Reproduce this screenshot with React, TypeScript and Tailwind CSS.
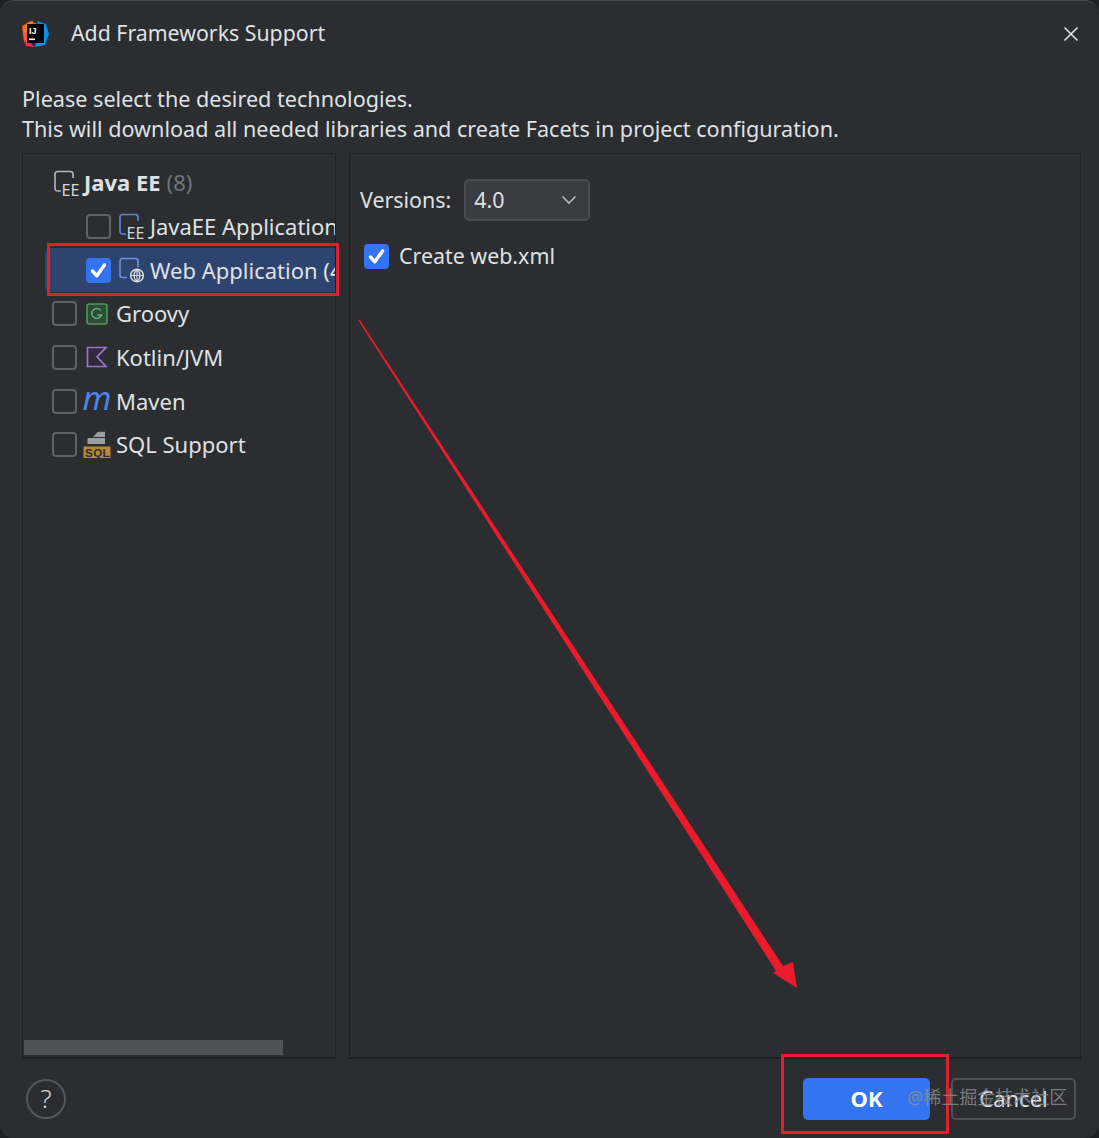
import React from "react";

const Box = ({ checked = false }: { checked?: boolean }) =>
  checked ? (
    <span className="w-[25px] h-[25px] rounded-[4px] bg-[#3574f0] flex items-center justify-center shrink-0">
      <svg width="19" height="19" viewBox="0 0 19 19" fill="none">
        <path d="M3.5 10 L7.8 14.8 L15.5 4" stroke="#fff" strokeWidth="3.4" strokeLinecap="round" strokeLinejoin="round" />
      </svg>
    </span>
  ) : (
    <span className="w-[25px] h-[25px] rounded-[4px] border-2 border-[#5f6165] shrink-0" />
  );

const EE = ({ color }: { color: string }) => (
  <svg width="26" height="26" viewBox="0 0 26 26" fill="none" className="shrink-0">
    <path d="M8 21 H4.5 a2.5 2.5 0 0 1 -2.5 -2.5 V4 a2.5 2.5 0 0 1 2.5 -2.5 H17.5 a2.5 2.5 0 0 1 2.5 2.5 V8" stroke={color} strokeWidth="1.6" />
    <text x="8.5" y="25.5" fontSize="16" fill="#d5d7da" fontFamily="'Noto Sans', sans-serif">EE</text>
  </svg>
);

const Web = () => (
  <svg width="26" height="26" viewBox="0 0 26 26" fill="none" className="shrink-0">
    <path d="M9 20.5 H4.5 a2.5 2.5 0 0 1 -2.5 -2.5 V4 a2.5 2.5 0 0 1 2.5 -2.5 H17.5 a2.5 2.5 0 0 1 2.5 2.5 V10" stroke="#6c93e8" strokeWidth="1.6" />
    <circle cx="19" cy="18.5" r="6.3" fill="#2e436e" stroke="#d5d7da" strokeWidth="1.6" />
    <path d="M13 18.5 H25 M19 12.5 V24.5 M19 12.5 C15 15.5 15 21.5 19 24.5 M19 12.5 C23 15.5 23 21.5 19 24.5" stroke="#d5d7da" strokeWidth="1.2" />
  </svg>
);

const Groovy = () => (
  <svg width="24" height="24" viewBox="0 0 24 24" fill="none" className="shrink-0">
    <rect x="2" y="2" width="20" height="20" rx="2.5" fill="#2f4a36" stroke="#4e9a5b" strokeWidth="1.6" />
    <path d="M16 8.6 A5 5 0 1 0 16.6 13 H12.5" stroke="#5fb56e" strokeWidth="1.5" />
  </svg>
);

const Kotlin = () => (
  <svg width="24" height="24" viewBox="0 0 24 24" fill="none" className="shrink-0">
    <path d="M2.5 2.5 H21 L12 11.8 L21 21.5 H2.5 Z" stroke="#9873cf" strokeWidth="1.7" strokeLinejoin="miter" fill="#2f2b38" />
  </svg>
);

const Sql = () => (
  <svg width="28" height="30" viewBox="0 0 28 30" fill="none" className="shrink-0">
    <path d="M4.5 8 H22 V14 H4.5 Z" fill="#9a9da3" />
    <path d="M10 7 L15 1.8 H22 V7 Z" fill="#9a9da3" />
    <rect x="0.5" y="16.5" width="27" height="11.5" fill="#b98a35" />
    <text x="2" y="26.5" fontSize="11.5" fontWeight="700" letterSpacing="0.5" fill="#2b2d30" fontFamily="'Liberation Sans', sans-serif">SQL</text>
  </svg>
);

const Row = ({ indent, icon, label, checked, selected }: { indent: string; icon: React.ReactNode; label: string; checked?: boolean; selected?: boolean }) => (
  <div className={`h-[43.67px] flex items-center whitespace-nowrap overflow-hidden ${indent} ${selected ? "bg-[#2e436e] rounded-l-[6px] ml-[22px]" : ""}`}>
    <Box checked={checked} />
    <span className="ml-[7px] w-[26px] flex justify-center">{icon}</span>
    <span className="ml-[6px]">{label}</span>
  </div>
);

export default function App() {
  return (
    <div className="relative w-[1099px] h-[1138px] overflow-hidden bg-[#1f2023] font-['Noto_Sans','Liberation_Sans',sans-serif] text-[22px] text-[#dfe1e5]">
      <div className="w-full h-full flex flex-col rounded-[14px] border-t border-[#45474b] bg-[#2b2d30]">
        <header className="h-[66px] flex items-center pl-[21px] pr-[20px] shrink-0">
          <svg width="28" height="28" viewBox="0 0 28 28" className="shrink-0">
            <path d="M1 6 L10 1 L16 4 L10 24 L3 22 Z" fill="#fc5c3a" />
            <path d="M6 3 L12 1 L10 12 L2 12 Z" fill="#f97a12" />
            <path d="M16 1 L25 4 L28 14 L24 25 L14 27 L18 10 Z" fill="#0a8ee8" />
            <path d="M3 19 L14 27 L5 26 Z" fill="#fe2857" />
            <rect x="6" y="4" width="17" height="19" fill="#000" />
            <text x="8" y="13.5" fontSize="9" fontWeight="700" fill="#fff" fontFamily="'Liberation Sans', sans-serif">IJ</text>
            <rect x="8" y="18.5" width="6" height="1.6" fill="#fff" />
          </svg>
          <span className="ml-[22px] mb-[3px] text-[21.3px] text-[#dfe1e5]">Add Frameworks Support</span>
          <svg width="16" height="16" viewBox="0 0 16 16" className="ml-auto" fill="none">
            <path d="M1.5 1.5 L14.5 14.5 M14.5 1.5 L1.5 14.5" stroke="#dfe1e5" strokeWidth="1.6" />
          </svg>
        </header>

        <div className="pl-[22px] mt-[17px] leading-[30px] text-[21.6px] shrink-0">
          <p>Please select the desired technologies.</p>
          <p>This will download all needed libraries and create Facets in project configuration.</p>
        </div>

        <div className="flex gap-[13px] pl-[22px] pr-[18px] mt-[9px] h-[906px] shrink-0">
          <aside className="w-[314px] border border-[#1e1f22] border-b-2 flex flex-col overflow-hidden">
            <div className="pt-[7px] flex flex-col">
              <div className="h-[43.67px] flex items-center pl-[30px] whitespace-nowrap">
                <EE color="#b4b8bf" />
                <span className="ml-[5px] font-bold">Java EE</span>
                <span className="ml-[6px] text-[#6f737a]">(8)</span>
              </div>
              <Row indent="pl-[63px]" icon={<EE color="#5c86e0" />} label="JavaEE Application" />
              <Row indent="pl-[41px]" selected checked icon={<Web />} label="Web Application (4.0)" />
              <Row indent="pl-[29px]" icon={<Groovy />} label="Groovy" />
              <Row indent="pl-[29px]" icon={<Kotlin />} label="Kotlin/JVM" />
              <Row indent="pl-[29px]" icon={<span className="text-[#4f83e8] italic text-[33px] leading-[26px] -mt-[7px]">m</span>} label="Maven" />
              <Row indent="pl-[29px]" icon={<Sql />} label="SQL Support" />
            </div>
            <div className="mt-auto h-[15px] mb-[2px] w-[259px] ml-px bg-[#505254] shrink-0" />
          </aside>

          <main className="flex-1 border border-[#1e1f22] border-b-2 pl-[10px] pt-[25px] text-[21.4px]">
            <div className="flex items-center">
              <span>Versions:</span>
              <div className="ml-[13px] w-[126px] h-[42px] rounded-[5px] border-2 border-[#4a4c50] bg-[#393b40] flex items-center justify-between pl-[8px] pr-[11px]">
                <span>4.0</span>
                <svg width="16" height="10" viewBox="0 0 16 10" fill="none">
                  <path d="M1.5 1.5 L8 8 L14.5 1.5" stroke="#b4b8bf" strokeWidth="1.6" />
                </svg>
              </div>
            </div>
            <div className="flex items-center mt-[19px] ml-[4px]">
              <Box checked />
              <span className="ml-[10px]">Create web.xml</span>
            </div>
          </main>
        </div>

        <footer className="flex-1 flex items-center pl-[26px] pr-[23px]">
          <span className="w-[40px] h-[40px] rounded-full border-2 border-[#55575b] flex items-center justify-center text-[26px] font-light text-[#d0d2d6]">?</span>
          <button className="ml-auto w-[127px] h-[42px] rounded-[5px] bg-[#3574f0] text-white font-bold">OK</button>
          <button className="ml-[21px] w-[125px] h-[42px] rounded-[5px] border-2 border-[#4e5054] text-[#dfe1e5]">Cancel</button>
        </footer>
      </div>

      {/* annotations drawn over the screenshot */}
      <div className="absolute left-[47px] top-[243px] w-[292px] h-[53px] border-[3px] border-[#e0202c]" />
      <div className="absolute left-[781px] top-[1054px] w-[168px] h-[80px] border-[3px] border-[#e0202c]" />
      <svg className="absolute left-0 top-0 pointer-events-none" width="1099" height="1138" viewBox="0 0 1099 1138">
        <polygon points="358,320 359.5,319.5 783,966 793,962 797,988 773,973 776,971" fill="#ea1c2b" />
      </svg>
      <span className="absolute left-[907px] top-[1084px] text-[18px] leading-[26px] whitespace-nowrap text-[#8f9196]/80 font-['Noto_Sans','Noto_Sans_CJK_SC',sans-serif]">@稀土掘金技术社区</span>
    </div>
  );
}
